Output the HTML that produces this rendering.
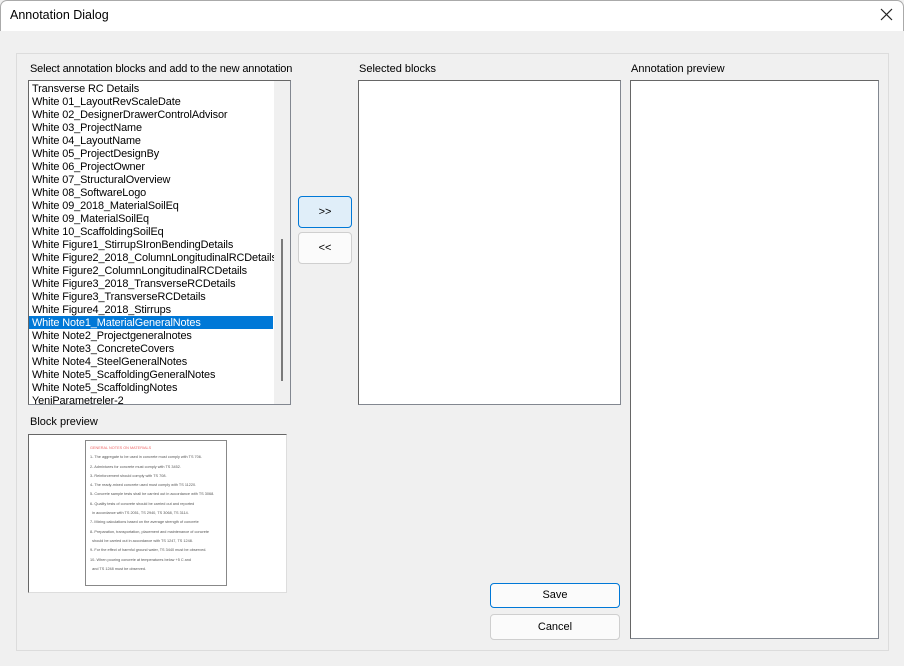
<!DOCTYPE html>
<html><head><style>
*{margin:0;padding:0;box-sizing:border-box}
body{width:904px;height:666px;background:#f0f0f0;font-family:"Liberation Sans",sans-serif;font-size:11px;color:#000;position:relative;overflow:hidden}
.a{position:absolute}
.title{left:0;top:0;width:904px;height:31px;background:#fff;border:1px solid #aaa;border-bottom:none;border-radius:7px 7px 0 0}
.box{background:#fff;border:1px solid #828790;border-top-color:#666;border-left-color:#666}
.it{position:absolute;left:3px;height:13px;line-height:13px;white-space:nowrap;font-size:10.9px;letter-spacing:-0.1px}
.btn{background:#fbfbfb;border:1px solid #cfcfcf;border-radius:4px;text-align:center;font-size:11px}
</style></head><body>
<div class="a title"></div>
<div class="a" style="left:10px;top:8px;font-size:12.5px">Annotation Dialog</div>
<svg class="a" style="left:880px;top:8px" width="14" height="14"><path d="M1 1L12 12M12 1L1 12" stroke="#222" stroke-width="1.2"/></svg>
<div class="a" style="left:16px;top:53px;width:873px;height:598px;border:1px solid #dcdcdc"></div>
<div class="a" style="left:30px;top:63px;letter-spacing:-0.15px">Select annotation blocks and add to the new annotation</div>
<div class="a" style="left:359px;top:63px">Selected blocks</div>
<div class="a" style="left:631px;top:63px">Annotation preview</div>
<div class="a box" style="left:28px;top:80px;width:263px;height:325px;overflow:hidden">
<div class="a" style="left:0;top:235px;width:244px;height:13px;background:#0078d7"></div>
<div class="it" style="top:2px">Transverse RC Details</div>
<div class="it" style="top:15px">White 01_LayoutRevScaleDate</div>
<div class="it" style="top:28px">White 02_DesignerDrawerControlAdvisor</div>
<div class="it" style="top:41px">White 03_ProjectName</div>
<div class="it" style="top:54px">White 04_LayoutName</div>
<div class="it" style="top:67px">White 05_ProjectDesignBy</div>
<div class="it" style="top:80px">White 06_ProjectOwner</div>
<div class="it" style="top:93px">White 07_StructuralOverview</div>
<div class="it" style="top:106px">White 08_SoftwareLogo</div>
<div class="it" style="top:119px">White 09_2018_MaterialSoilEq</div>
<div class="it" style="top:132px">White 09_MaterialSoilEq</div>
<div class="it" style="top:145px">White 10_ScaffoldingSoilEq</div>
<div class="it" style="top:158px">White Figure1_StirrupSIronBendingDetails</div>
<div class="it" style="top:171px">White Figure2_2018_ColumnLongitudinalRCDetails</div>
<div class="it" style="top:184px">White Figure2_ColumnLongitudinalRCDetails</div>
<div class="it" style="top:197px">White Figure3_2018_TransverseRCDetails</div>
<div class="it" style="top:210px">White Figure3_TransverseRCDetails</div>
<div class="it" style="top:223px">White Figure4_2018_Stirrups</div>
<div class="it" style="top:236px;color:#fff">White Note1_MaterialGeneralNotes</div>
<div class="it" style="top:249px">White Note2_Projectgeneralnotes</div>
<div class="it" style="top:262px">White Note3_ConcreteCovers</div>
<div class="it" style="top:275px">White Note4_SteelGeneralNotes</div>
<div class="it" style="top:288px">White Note5_ScaffoldingGeneralNotes</div>
<div class="it" style="top:301px">White Note5_ScaffoldingNotes</div>
<div class="it" style="top:314px">YeniParametreler-2</div>
<div class="a" style="left:245px;top:0;width:17px;height:324px;background:#f0f0f0"></div>
<div class="a" style="left:252px;top:158px;width:2px;height:142px;background:#7a7a7a"></div>
</div>
<div class="a box" style="left:358px;top:80px;width:263px;height:325px"></div>
<div class="a box" style="left:630px;top:80px;width:249px;height:559px"></div>
<div class="a btn" style="left:298px;top:196px;width:54px;height:32px;line-height:30px;background:#e0eef9;border-color:#0078d7">&gt;&gt;</div>
<div class="a btn" style="left:298px;top:232px;width:54px;height:32px;line-height:30px">&lt;&lt;</div>
<div class="a" style="left:30px;top:416px">Block preview</div>
<div class="a box" style="left:28px;top:434px;width:259px;height:159px;border-color:#666 #ddd #ddd #666">
<div class="a" style="left:56px;top:5px;width:142px;height:146px;border:1px solid #888;font-size:3.8px;color:#555;padding:3px 4px;line-height:9.3px">
<div style="color:#e66">GENERAL NOTES ON MATERIALS</div>
<div>1- The aggregate to be used in concrete must comply with TS 706.</div>
<div>2- Admixtures for concrete must comply with TS 3452.</div>
<div>3- Reinforcement should comply with TS 708.</div>
<div>4- The ready-mixed concrete used must comply with TS 11220.</div>
<div>5- Concrete sample tests shall be carried out in accordance with TS 3068.</div>
<div>6- Quality tests of concrete should be carried out and reported</div>
<div>&nbsp;&nbsp;in accordance with TS 2051, TS 2940, TS 3068, TS 3114.</div>
<div>7- Mixing calculations based on the average strength of concrete</div>
<div>8- Preparation, transportation, placement and maintenance of concrete</div>
<div>&nbsp;&nbsp;should be carried out in accordance with TS 1247, TS 1248.</div>
<div>9- For the effect of harmful ground water, TS 3440 must be observed.</div>
<div>10- When pouring concrete at temperatures below +5 C and</div>
<div>&nbsp;&nbsp;and TS 1248 must be observed.</div>
</div></div>
<div class="a btn" style="left:490px;top:583px;width:130px;height:25px;line-height:23px;border-color:#0078d7">Save</div>
<div class="a btn" style="left:490px;top:614px;width:130px;height:26px;line-height:24px">Cancel</div>
</body></html>
